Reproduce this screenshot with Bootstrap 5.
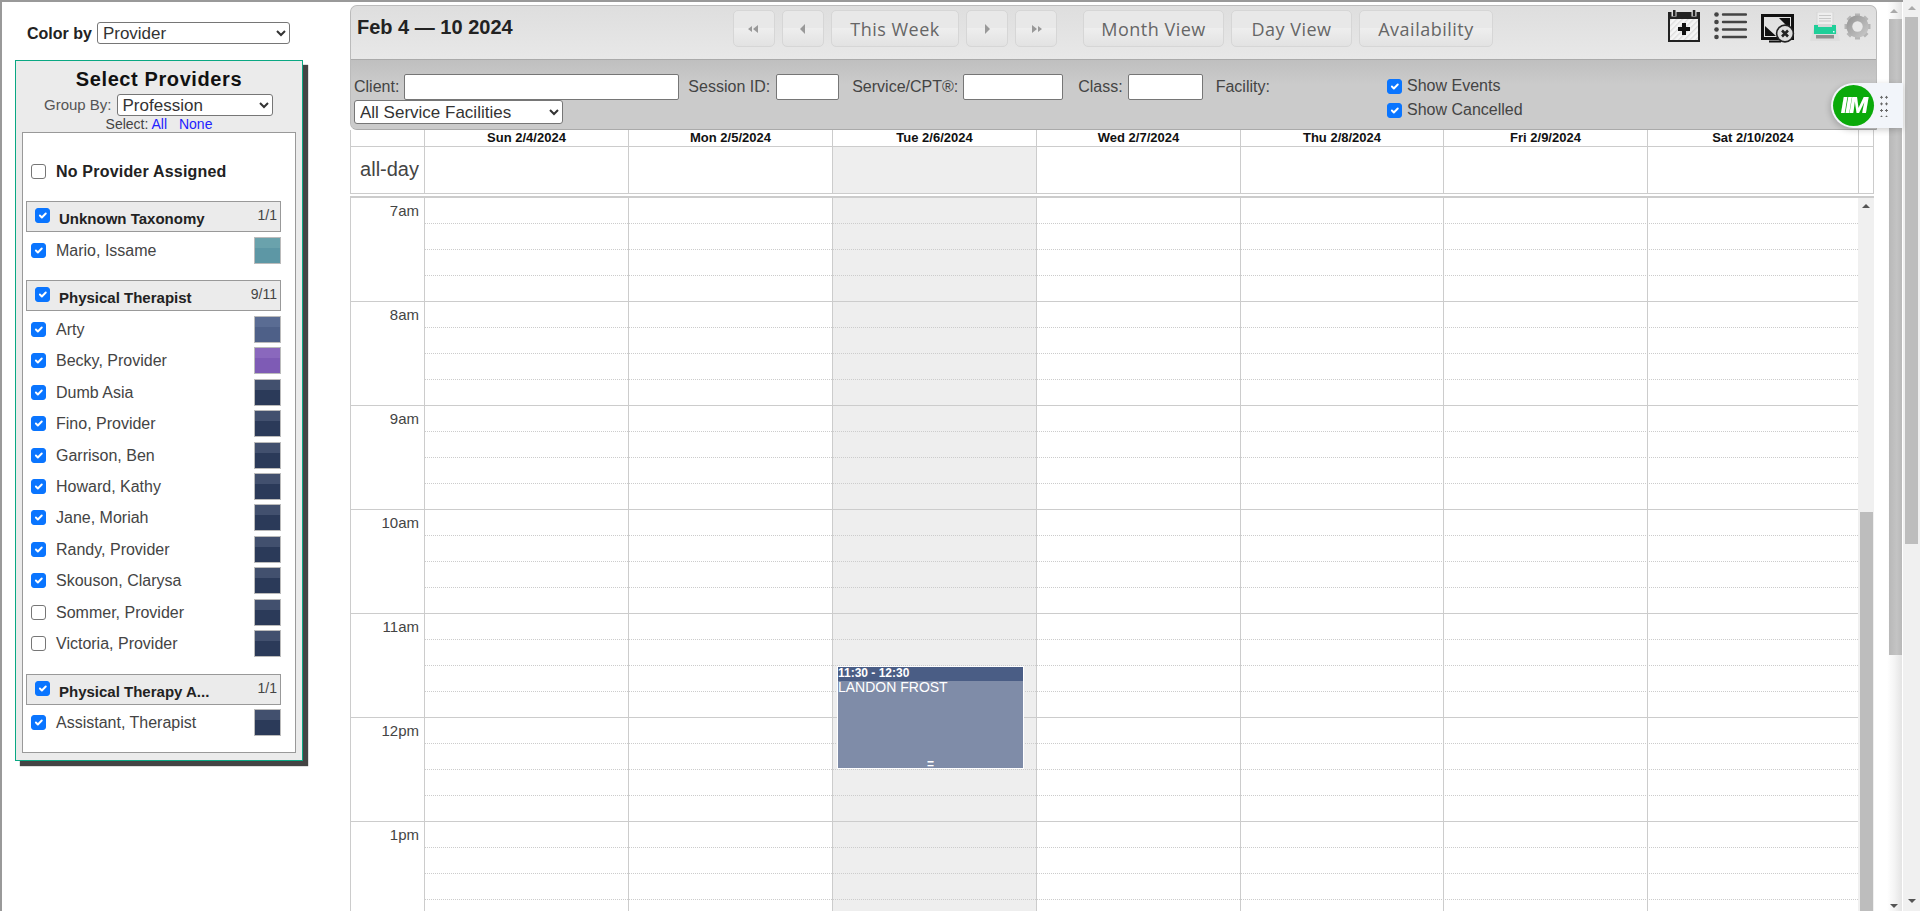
<!DOCTYPE html>
<html lang="en">
<head>
<meta charset="utf-8">
<title>Calendar</title>
<link href="https://cdn.jsdelivr.net/npm/bootstrap@5.3.0/dist/css/bootstrap.min.css" rel="stylesheet">
<style>
html,body{height:911px;overflow:hidden}
body{font-family:"Liberation Sans",Arial,sans-serif;font-size:16px;color:#444;background:#fff;border-top:2px solid #999;border-left:2px solid #999;margin:0}
.shell{height:909px;margin-right:17px}
.sideway{width:348px;flex:none;padding:20px 0 0 13px}
.colorby{font-weight:700;color:#222;padding-left:12px;height:38px;gap:5px}
select.plain{font:17px "Liberation Sans",sans-serif;color:#333;background:#fff;border:1px solid #767676;border-radius:3px;height:22px;padding:0 0 0 1px}
.sel-color{width:193px}
.sel-group{width:156px}
.panel-prov{width:288px;height:701px;background:#ebebeb;border:1px solid #0aa883;box-shadow:5px 5px 1px #444;padding:4px 6px 7px 6px}
.prov-title{font-size:20px;font-weight:700;color:#111;text-align:center;line-height:28px;letter-spacing:.6px}
.prov-group{height:24px;gap:5px;color:#555;font-size:15px;padding-left:22px}
.prov-select{font-size:14px;line-height:14px;text-align:center;color:#444;height:15px}
.prov-select a{color:#22f;text-decoration:none;margin-right:8px}
.prov-select a:last-child{margin-right:0}
.prov-box{background:#fff;border:1px solid #999;height:621px;padding:30px 14px 0 3px;color:#444}
.form-check-input.tick{width:15px;height:15px;margin:0;flex:none;border-color:#767676;border-radius:3px}
.form-check-input.tick:checked{background-color:#0a75ff;border-color:#0a75ff}
.noprov{height:17px;padding-left:5px;gap:10px;font-weight:700;color:#222;font-size:16px;margin-bottom:21px;letter-spacing:.2px}
.grp-head{height:31px;background:#ebebeb;border:1px solid #999;position:relative;font-weight:700;font-size:15px;color:#222;margin-bottom:4.5px}
.grp-head .form-check-input{position:absolute;left:8px;top:6px}
.grp-name{position:absolute;left:32px;top:8px;line-height:18px;white-space:nowrap}
.grp-count{position:absolute;right:3px;top:5px;font-weight:400;font-size:14px;line-height:16px;color:#444}
.prov-row{height:31.4px;padding-left:5px;gap:10px;font-size:16px;color:#444;align-items:flex-start}
.prov-row .form-check-input{margin-top:6px}
.prov-row .who{line-height:27px;flex:1}
.swatch{width:27px;height:27px;border:1px solid #bbb;flex:none;background:linear-gradient(#42506e 0 41%,#2b3a59 41%)}
.swatch.teal{background:linear-gradient(#6aa2ac 0 41%,#5d97a5 41%)}
.swatch.slate{background:linear-gradient(#5a6c93 0 41%,#4e6088 41%)}
.swatch.violet{background:linear-gradient(#8a68bd 0 41%,#7e5bb5 41%)}
.grp-gap{margin-top:12.6px}
.calwrap{width:1527px;flex:none;padding-top:3px;position:relative}
.toolbar{height:125px;border:1px solid #bbb;border-bottom:1px solid #aaa;border-radius:7px 7px 0 7px;overflow:hidden;background:#ccc}
.tool-top{height:54px;background:linear-gradient(#dedede,#e8e8e8);border-bottom:1px solid #aaa;padding:4px 6px 0 6px;position:relative}
.range{width:376px;flex:none;font-size:20px;font-weight:700;color:#222;line-height:28px;padding-top:3px}
.calbtn{height:37px;background:linear-gradient(#e8e8e8 0 50%,#eeeeee 50%,#e2e2e2);border:1px solid #d6d6d6;border-radius:5px;color:#666;font:18px "Open Sans",sans-serif;display:flex;align-items:center;justify-content:center;padding:0;letter-spacing:.5px}
.calbtn svg{display:block}
.w-ic{width:42px;margin-right:7px}
.w-wk{width:128px;margin-right:7px}
.w-mo{width:141px;margin-right:7px}
.w-dy{width:121px;margin-right:7px}
.w-av{width:134px}
.w-last{margin-right:26px}
.tool-ic{position:absolute;display:block}
.ic-cal{left:1318px;top:8px}
.ic-list{left:1364px;top:10px}
.ic-mon{left:1411px;top:12px}
.ic-print{left:1459px;top:10px}
.ic-gear{left:1494px;top:11px}
.tool-bot{height:70px;background:linear-gradient(#bfbfbf,#cbcbcb 35%);font-size:16px;color:#444;padding:14px 3px 0 3px;position:relative;line-height:25px}
.filt-line{height:26px}
.fin{height:26px;border:1px solid #767676;border-radius:2px;background:#fff;padding:0}
.in-client{width:275px;margin-left:5px}
.lb-session{margin-left:9px}
.in-session{width:63px;margin-left:6px}
.lb-service{margin-left:13px}
.in-service{width:100px;margin-left:5px}
.lb-class{margin-left:15px}
.in-class{width:75px;margin-left:5px}
.lb-fac{margin-left:13px}
select.sel-fac{width:209px;height:24px;display:block}
.checks{position:absolute;left:1036px;top:14px;line-height:24px;color:#444}
.checks .form-check-input{margin-right:5px}
.checks>div{height:24px}
.heads{height:17px;font-size:13px;font-weight:700;color:#111;border-bottom:1px solid #ccc;line-height:16px;text-align:center;width:1524px}
.c-time{width:75px;flex:none;border-right:1px solid #ccc;border-left:1px solid #ccc}
.c-day{flex:none;border-right:1px solid #ccc;position:relative}
.d1{width:204px}.d2{width:204px}.d3{width:204px}.d4{width:204px}.d5{width:203px}.d6{width:204px}.d7{width:211px}
.c-tail{width:15px;flex:none;border-right:1px solid #ccc}
.shaded{background:#eee}
.allday{height:47px;width:1524px;border-bottom:1px solid #ccc}
.allday .c-time{font-size:20px;line-height:45px;text-align:right;padding-right:5px;color:#444}
.gapbar{height:4px;background:linear-gradient(#fff 0 50%,#ccc 50%);width:1524px}
.gridwrap{height:713px;overflow:hidden;position:relative;width:1524px}
.timegrid{height:713px}
.timegrid .c-time,.timegrid .c-day{height:713px}
.hours{position:absolute;left:1px;right:16px;top:0}
.hourblk{height:104px;border-bottom:1px solid #ccc;position:relative}
.qt{height:26px;border-bottom:1px dotted #ccc;margin-left:74px}
.hourlab{position:absolute;left:0;top:4px;width:68px;text-align:right;font-size:15px;line-height:18px;color:#444}
.tevent{position:absolute;left:4px;top:468px;width:187px;height:103px;background:#7f8ca8;border:1px solid #fff;color:#fff;font-size:14px;z-index:2}
.tevent-head{background:#4a5d85;font-size:12px;font-weight:700;height:14px;line-height:12px}
.tevent-body{line-height:13px}
.tevent-grip{position:absolute;left:0;right:0;bottom:-1px;text-align:center;font-size:12px;line-height:10px;font-weight:700}
.innerbar{position:absolute;left:1508px;top:0;width:17px;height:713px;background:#f0f0f0;z-index:3}
.ibar-thumb{position:absolute;left:2px;top:314px;width:13px;height:399px;background:#bdbdbd}
.tri-up{position:absolute;width:0;height:0;border-left:4px solid transparent;border-right:4px solid transparent;border-bottom:4px solid #555}
.tri-dn{position:absolute;width:0;height:0;border-left:4px solid transparent;border-right:4px solid transparent;border-top:4px solid #555}
.ibar-arrow{left:4px;top:6px}
.midbar{width:15px;flex:none;height:909px;position:relative;margin-left:10px;background:linear-gradient(90deg,#fff,#f4f4f4 50%,#e4e4e4)}
.midthumb{position:absolute;left:2px;right:0;top:17px;height:636px;background:linear-gradient(90deg,#b8b8b8,#c4c4c4 60%,#b8b8b8)}
.mid-u{left:3px;top:7px;border-bottom-color:#aaa}
.mid-d{left:3px;top:902px}
.pagebar{position:fixed;right:0;top:0;width:17px;height:911px;background:#f0f0f0}
.pagethumb{position:absolute;left:2px;top:17px;width:13px;height:527px;background:#bdbdbd}
.page-u{left:5px;top:6px;border-bottom-color:#aaa}
.page-d{left:5px;top:899px}
.imwidget{position:absolute;left:1481px;top:81px;width:72px;height:45px;background:#f2f5fa;border-radius:23px 0 0 23px;box-shadow:-1px 2px 6px rgba(0,0,0,.2);z-index:5}
.imcircle{position:absolute;left:2px;top:2px;width:41px;height:41px;border-radius:50%;background:#0aaa0a;color:#fff;font:italic 900 22px/41px Roboto,sans-serif;text-align:center;letter-spacing:-2px}
.imdots{position:absolute;left:48px;top:11px;width:10px;height:23px;background-image:radial-gradient(circle,#666 1.1px,transparent 1.3px);background-size:5px 6.6px}
</style>
</head>
<body>
<div class="shell d-flex">
  <div class="sideway">
    <div class="colorby d-flex align-items-start"><span>Color by</span><select class="plain sel-color"><option>Provider</option></select></div>
    <div class="panel-prov">
      <div class="prov-title">Select Providers</div>
      <div class="prov-group d-flex align-items-center"><span>Group By:</span><select class="plain sel-group"><option>Profession</option></select></div>
      <div class="prov-select">Select: <a href="#">All</a> <a href="#">None</a></div>
      <div class="prov-box">
        <div class="noprov d-flex align-items-center"><input class="form-check-input tick" type="checkbox"><span>No Provider Assigned</span></div>
        <div class="grp-head"><input class="form-check-input tick" type="checkbox" checked><span class="grp-name">Unknown Taxonomy</span><span class="grp-count">1/1</span></div>
        <div class="prov-row d-flex"><input class="form-check-input tick" type="checkbox" checked><span class="who">Mario, Issame</span><span class="swatch teal"></span></div>
        <div class="grp-head grp-gap"><input class="form-check-input tick" type="checkbox" checked><span class="grp-name">Physical Therapist</span><span class="grp-count">9/11</span></div>
        <div class="prov-row d-flex"><input class="form-check-input tick" type="checkbox" checked><span class="who">Arty</span><span class="swatch slate"></span></div>
        <div class="prov-row d-flex"><input class="form-check-input tick" type="checkbox" checked><span class="who">Becky, Provider</span><span class="swatch violet"></span></div>
        <div class="prov-row d-flex"><input class="form-check-input tick" type="checkbox" checked><span class="who">Dumb Asia</span><span class="swatch"></span></div>
        <div class="prov-row d-flex"><input class="form-check-input tick" type="checkbox" checked><span class="who">Fino, Provider</span><span class="swatch"></span></div>
        <div class="prov-row d-flex"><input class="form-check-input tick" type="checkbox" checked><span class="who">Garrison, Ben</span><span class="swatch"></span></div>
        <div class="prov-row d-flex"><input class="form-check-input tick" type="checkbox" checked><span class="who">Howard, Kathy</span><span class="swatch"></span></div>
        <div class="prov-row d-flex"><input class="form-check-input tick" type="checkbox" checked><span class="who">Jane, Moriah</span><span class="swatch"></span></div>
        <div class="prov-row d-flex"><input class="form-check-input tick" type="checkbox" checked><span class="who">Randy, Provider</span><span class="swatch"></span></div>
        <div class="prov-row d-flex"><input class="form-check-input tick" type="checkbox" checked><span class="who">Skouson, Clarysa</span><span class="swatch"></span></div>
        <div class="prov-row d-flex"><input class="form-check-input tick" type="checkbox"><span class="who">Sommer, Provider</span><span class="swatch"></span></div>
        <div class="prov-row d-flex"><input class="form-check-input tick" type="checkbox"><span class="who">Victoria, Provider</span><span class="swatch"></span></div>
        <div class="grp-head grp-gap"><input class="form-check-input tick" type="checkbox" checked><span class="grp-name">Physical Therapy A...</span><span class="grp-count">1/1</span></div>
        <div class="prov-row d-flex"><input class="form-check-input tick" type="checkbox" checked><span class="who">Assistant, Therapist</span><span class="swatch"></span></div>
      </div>
    </div>
  </div>
  <div class="calwrap">
    <div class="toolbar">
      <div class="tool-top d-flex align-items-start">
        <div class="range">Feb 4 — 10 2024</div>
        <button class="calbtn w-ic" type="button" aria-label="Previous month"><svg width="14" height="8" viewBox="0 0 14 8"><path d="M5 1v6L1 4zM11 0v8L6 4z" fill="#999"/></svg></button>
        <button class="calbtn w-ic" type="button" aria-label="Previous"><svg width="6" height="10" viewBox="0 0 6 10"><path d="M5 0v10L0 5z" fill="#999"/></svg></button>
        <button class="calbtn w-wk" type="button">This Week</button>
        <button class="calbtn w-ic" type="button" aria-label="Next"><svg width="6" height="10" viewBox="0 0 6 10"><path d="M1 0v10l5-5z" fill="#999"/></svg></button>
        <button class="calbtn w-ic w-last" type="button" aria-label="Next month"><svg width="14" height="8" viewBox="0 0 14 8"><path d="M3 0v8l5-4zM9 1v6l4-3z" fill="#999"/></svg></button>
        <button class="calbtn w-mo" type="button">Month View</button>
        <button class="calbtn w-dy" type="button">Day View</button>
        <button class="calbtn w-av" type="button">Availability</button>
      </div>
      <div class="tool-bot">
        <div class="filt-line d-flex">
          <span>Client:</span><input class="fin in-client" type="text" aria-label="Client">
          <span class="lb-session">Session ID:</span><input class="fin in-session" type="text" aria-label="Session ID">
          <span class="lb-service">Service/CPT®:</span><input class="fin in-service" type="text" aria-label="Service">
          <span class="lb-class">Class:</span><input class="fin in-class" type="text" aria-label="Class">
          <span class="lb-fac">Facility:</span>
        </div>
        <select class="plain sel-fac" aria-label="Facility"><option>All Service Facilities</option></select>
        <div class="checks">
          <div class="d-flex align-items-center"><input class="form-check-input tick" type="checkbox" checked><span>Show Events</span></div>
          <div class="d-flex align-items-center"><input class="form-check-input tick" type="checkbox" checked><span>Show Cancelled</span></div>
        </div>
      </div>
    </div>

    <svg class="tool-ic ic-cal" width="33" height="33" viewBox="0 0 33 33" aria-label="New appointment">
      <defs><pattern id="hatch" width="4" height="4" patternUnits="userSpaceOnUse" patternTransform="rotate(-45)"><rect width="4" height="4" fill="#f6f6f6"/><rect width="4" height="1.4" fill="#ddd"/></pattern></defs>
      <rect x="1" y="3" width="30" height="28" fill="url(#hatch)" stroke="#222" stroke-width="2"/>
      <rect x="1" y="3" width="30" height="6" fill="#222"/>
      <rect x="3.5" y="0.5" width="5" height="6" fill="#ddd"/><rect x="23.5" y="0.5" width="5" height="6" fill="#ddd"/>
      <rect x="5" y="0" width="2.5" height="6" fill="#222"/><rect x="24.8" y="0" width="2.5" height="6" fill="#222"/>
      <path d="M14 13h4v4h4v4h-4v4h-4v-4h-4v-4h4z" fill="#111"/>
    </svg>
    <svg class="tool-ic ic-list" width="33" height="28" viewBox="0 0 33 28" aria-label="List">
      <g fill="#444"><circle cx="2.5" cy="2.5" r="2.3"/><circle cx="2.5" cy="10" r="2.3"/><circle cx="2.5" cy="17.5" r="2.3"/><circle cx="2.5" cy="25" r="2.3"/></g>
      <g stroke="#444" stroke-width="2.4" stroke-linecap="round"><path d="M9 2.5h23M9 10h23M9 17.5h23M9 25h23"/></g>
    </svg>
    <svg class="tool-ic ic-mon" width="34" height="29" viewBox="0 0 34 29" aria-label="Fullscreen">
      <rect x="1.5" y="1.5" width="30" height="23" fill="none" stroke="#111" stroke-width="3"/>
      <path d="M4 12l11 10H4zM29 4v11L18 4z" fill="#111"/>
      <path d="M8 27.5h12" stroke="#111" stroke-width="2"/>
      <circle cx="24" cy="19.5" r="8.4" fill="#ddd" stroke="#222" stroke-width="1.6"/>
      <path d="M21 16.5l6 6M27 16.5l-6 6" stroke="#222" stroke-width="2.6"/>
    </svg>
    <svg class="tool-ic ic-print" width="32" height="29" viewBox="0 0 32 29" aria-label="Print">
      <path d="M3 23l3-11h20l3 11z" fill="#d6d6d6"/>
      <rect x="8" y="0" width="16" height="13" fill="#eee" stroke="#d5d5d5"/><path d="M10 3.5h12M10 6.5h12M10 9h12" stroke="#c8c8c8"/>
      <path d="M5 13h22v10H5z" fill="#1fcf99"/><path d="M9 12h14v3H9z" fill="#d8d8d8"/>
      <rect x="24" y="19" width="1.5" height="1.5" fill="#dff"/>
      <path d="M3 22h26l2 7H1z" fill="#dedede"/><rect x="7" y="23" width="18" height="3.5" fill="#8f8f8f"/>
    </svg>
    <svg class="tool-ic ic-gear" width="27" height="27" viewBox="0 0 27 27" aria-label="Settings">
      <defs><linearGradient id="gr" x1="0" y1="0" x2="1" y2="1"><stop offset="0" stop-color="#9a9a9a"/><stop offset="1" stop-color="#c4c4c4"/></linearGradient></defs>
      <g stroke="#b5b5b5" stroke-width="5"><path d="M13.5 0.5v26M0.5 13.5h26M4.3 4.3l18.4 18.4M22.7 4.3L4.3 22.7"/></g>
      <circle cx="13.5" cy="13.5" r="8" fill="none" stroke="url(#gr)" stroke-width="6"/>
      <circle cx="13.5" cy="13.5" r="5.2" fill="#e8e8e8"/>
    </svg>

    <div class="imwidget"><div class="imcircle">IIM</div><div class="imdots"></div></div>

    <div class="heads d-flex">
      <div class="c-time"></div>
      <div class="c-day d1">Sun 2/4/2024</div><div class="c-day d2">Mon 2/5/2024</div><div class="c-day d3">Tue 2/6/2024</div><div class="c-day d4">Wed 2/7/2024</div><div class="c-day d5">Thu 2/8/2024</div><div class="c-day d6">Fri 2/9/2024</div><div class="c-day d7">Sat 2/10/2024</div><div class="c-tail"></div>
    </div>
    <div class="allday d-flex">
      <div class="c-time">all-day</div>
      <div class="c-day d1"></div><div class="c-day d2"></div><div class="c-day d3 shaded"></div><div class="c-day d4"></div><div class="c-day d5"></div><div class="c-day d6"></div><div class="c-day d7"></div><div class="c-tail"></div>
    </div>
    <div class="gapbar"></div>
    <div class="gridwrap">
      <div class="timegrid d-flex">
        <div class="c-time"></div>
        <div class="c-day d1"></div><div class="c-day d2"></div>
        <div class="c-day d3 shaded"><div class="tevent"><div class="tevent-head">11:30 - 12:30</div><div class="tevent-body">LANDON FROST</div><div class="tevent-grip">=</div></div></div>
        <div class="c-day d4"></div><div class="c-day d5"></div><div class="c-day d6"></div><div class="c-day d7"></div><div class="c-tail"></div>
      </div>
      <div class="hours">
        <div class="hourblk"><span class="hourlab">7am</span><div class="qt"></div><div class="qt"></div><div class="qt"></div></div>
        <div class="hourblk"><span class="hourlab">8am</span><div class="qt"></div><div class="qt"></div><div class="qt"></div></div>
        <div class="hourblk"><span class="hourlab">9am</span><div class="qt"></div><div class="qt"></div><div class="qt"></div></div>
        <div class="hourblk"><span class="hourlab">10am</span><div class="qt"></div><div class="qt"></div><div class="qt"></div></div>
        <div class="hourblk"><span class="hourlab">11am</span><div class="qt"></div><div class="qt"></div><div class="qt"></div></div>
        <div class="hourblk"><span class="hourlab">12pm</span><div class="qt"></div><div class="qt"></div><div class="qt"></div></div>
        <div class="hourblk"><span class="hourlab">1pm</span><div class="qt"></div><div class="qt"></div><div class="qt"></div></div>
      </div>
      <div class="innerbar"><span class="tri-up ibar-arrow"></span><div class="ibar-thumb"></div></div>
    </div>
  </div>
  <div class="midbar"><span class="tri-up mid-u"></span><div class="midthumb"></div><span class="tri-dn mid-d"></span></div>
</div>
<div class="pagebar"><span class="tri-up page-u"></span><div class="pagethumb"></div><span class="tri-dn page-d"></span></div>
<script src="https://cdn.jsdelivr.net/npm/bootstrap@5.3.0/dist/js/bootstrap.bundle.min.js"></script>
</body>
</html>
